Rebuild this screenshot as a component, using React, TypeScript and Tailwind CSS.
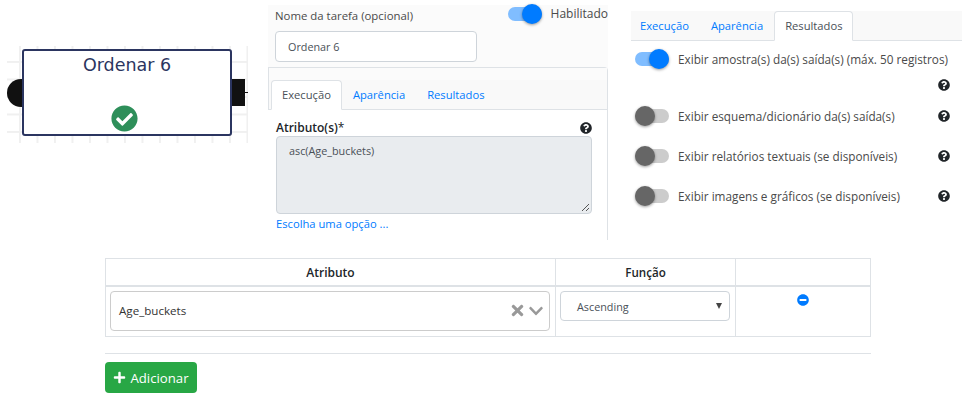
import { FaCheckCircle, FaChevronDown, FaMinusCircle, FaPlus, FaQuestionCircle, FaTimes } from "react-icons/fa";

function Toggle({ on }: { on?: boolean }) {
    return (
        <div className="relative w-[34px] h-[14px] shrink-0">
            <div className={`w-full h-full rounded-full ${on ? "bg-[#80bdff]" : "bg-[#ccc]"}`} />
            <div
                className={`absolute top-[-3px] w-5 h-5 rounded-full shadow-[0_1px_3px_rgba(0,0,0,0.4)] ${
                    on ? "right-0 bg-[#007bff]" : "left-0 bg-[#666]"
                }`}
            />
        </div>
    );
}

function Tabs({ active, recuo }: { active: string; recuo: string }) {
    const nomes = ["Execução", "Aparência", "Resultados"];
    return (
        <div className={`flex h-[30px] bg-[#f9f9f9] border-b border-[#dee2e6] text-[11.2px] ${recuo}`}>
            {nomes.map((nome) => (
                <div
                    key={nome}
                    className={
                        nome === active
                            ? "h-[30px] px-[10px] pt-[5px] bg-white text-[#495057] border border-[#dee2e6] border-b-white rounded-t"
                            : "h-[30px] px-[10px] pt-[5px] text-[#007bff] border border-transparent"
                    }
                >
                    {nome}
                </div>
            ))}
        </div>
    );
}

function OpcaoResultado({ on, texto }: { on?: boolean; texto: string }) {
    return (
        <div className="flex items-center h-10 pl-[4px]">
            <Toggle on={on} />
            <span className="ml-[9px] font-medium text-[11.75px] text-[#4a4a4a] flex-1 whitespace-nowrap">{texto}</span>
            <FaQuestionCircle size={12} className="text-[#212529] mr-[12px]" />
        </div>
    );
}

function NoTarefa() {
    return (
        <div className="relative w-[268px] h-[240px] shrink-0">
            {/* grade do canvas */}
            <div className="absolute left-[7px] top-[46px] w-[241px] h-[97px] bg-[linear-gradient(#f0f0f0_2px,transparent_2px),linear-gradient(90deg,#f0f0f0_2px,transparent_2px)] bg-[size:17.5px_17.5px] bg-[position:12px_15px]" />
            <div className="absolute left-[7px] top-[79px] w-[24px] h-[28px] rounded-l-full bg-[#111]" />
            <div className="absolute left-[228px] top-[79px] w-[17px] h-[27px] bg-[#111]" />
            <div className="absolute left-[245px] top-[92px] w-[3px] h-px bg-[#111]" />
            <div className="absolute left-[22px] top-[49px] w-[210px] h-[87px] bg-white border-2 border-[#2b3560] rounded-[3px] flex flex-col items-center">
                <span className="text-[#2b3560] text-[17.5px] leading-5 mt-[4px] font-['DejaVu_Sans',sans-serif]">Ordenar 6</span>
                <FaCheckCircle size={27} className="absolute left-[87px] top-[54px] text-[#2e8f5a]" />
            </div>
        </div>
    );
}

function PainelTarefa() {
    return (
        <div className="w-[340px] h-[235px] mt-[5px] shrink-0 bg-[#fbfbfb] flex flex-col">
            <div className="flex justify-between pl-[7px] h-[18px] leading-[20px] text-[#4a4a4a]">
                <span className="text-[11.4px] pt-px">Nome da tarefa (opcional)</span>
                <div className="flex items-center">
                    <Toggle on />
                    <span className="ml-[9px] font-medium whitespace-nowrap">Habilitado</span>
                </div>
            </div>
            <div className="ml-[7px] mt-[8px] w-[202px] h-[31px] bg-white border border-[#ced4da] rounded text-[#495057] text-[10.8px] leading-[29px] pl-[12px]">
                Ordenar 6
            </div>
            <div className="mt-[5px] flex-1 border-t border-r border-[#dee2e6] rounded-tr bg-white">
                <div className="pt-[12px] bg-[#fbfbfb] border-l border-[#dee2e6]">
                    <Tabs active="Execução" recuo="pl-[2px]" />
                </div>
                <div className="px-[8px] pt-[9px]">
                    <div className="flex justify-between items-center h-[17px] pr-[7px]">
                        <span className="font-semibold text-[#212529]">
                            Atributo(s)<span className="font-normal">*</span>
                        </span>
                        <FaQuestionCircle size={12} className="text-[#212529]" />
                    </div>
                    <div className="relative w-[316px] h-[78px] bg-[#e9ecef] border border-[#ced4da] rounded text-[#495057] text-[10.8px] pl-[12px] pt-[5px]">
                        asc(Age_buckets)
                        <svg className="absolute right-[1px] bottom-[1px]" width="9" height="9" viewBox="0 0 9 9">
                            <path d="M1 8 8 1M5 8 8 5" stroke="#555" strokeWidth="1" fill="none" />
                        </svg>
                    </div>
                    <div className="text-[#007bff] text-[11.2px] mt-[1px]">Escolha uma opção ...</div>
                </div>
            </div>
        </div>
    );
}

function PainelResultados() {
    return (
        <div className="ml-[23px] w-[331px] pt-[11px] shrink-0">
            <Tabs active="Resultados" recuo="[&>div:first-child]:-ml-[2px]" />
            <div className="flex items-center h-[36px] pl-[4px]">
                <Toggle on />
                <span className="ml-[9px] font-medium text-[11.78px] text-[#4a4a4a] whitespace-nowrap">Exibir amostra(s) da(s) saída(s) (máx. 50 registros)</span>
            </div>
            <div className="flex justify-end pr-[12px] h-[11px] items-center mt-[2px] mb-[6px]">
                <FaQuestionCircle size={12} className="text-[#212529]" />
            </div>
            <OpcaoResultado texto="Exibir esquema/dicionário da(s) saída(s)" />
            <OpcaoResultado texto="Exibir relatórios textuais (se disponíveis)" />
            <OpcaoResultado texto="Exibir imagens e gráficos (se disponíveis)" />
        </div>
    );
}

function TabelaAtributos() {
    return (
        <div className="ml-[105px] mt-[18px] w-[766px]">
            <table className="w-full table-fixed border-collapse border border-[#dee2e6]">
                <thead>
                    <tr className="h-[27px] border-b-2 border-[#dee2e6]">
                        <th className="w-[450px] border border-[#dee2e6] pt-[2px] font-semibold text-[#212529]">Atributo</th>
                        <th className="w-[180px] border border-[#dee2e6] pt-[2px] font-semibold text-[11.6px] text-[#212529]">Função</th>
                        <th className="border border-[#dee2e6]" />
                    </tr>
                </thead>
                <tbody>
                    <tr className="h-[51px]">
                        <td className="border border-[#dee2e6] pl-[4px] pr-[5px] pt-[4px] pb-[5px] align-top">
                            <div className="flex items-center h-[40px] border border-[#ccc] rounded text-[11.6px] text-[#333] pl-[8px] pr-[5px]">
                                <span className="flex-1">Age_buckets</span>
                                <FaTimes size={17} className="text-[#999]" />
                                <FaChevronDown size={16} className="text-[#999] ml-[2px]" />
                            </div>
                        </td>
                        <td className="border border-[#dee2e6] pl-[4px] pr-[5px] pt-[4px] pb-0 align-top">
                            <div className="relative h-[30px] border border-[#ced4da] rounded text-[#495057] text-[10.8px] leading-[30px] pl-[16px]">
                                Ascending
                                <div className="absolute right-[7px] top-[11px] w-0 h-0 border-l-[3px] border-r-[3px] border-t-[6px] border-l-transparent border-r-transparent border-t-[#444]" />
                            </div>
                        </td>
                        <td className="border border-[#dee2e6] pt-[7px] align-top">
                            <div className="flex justify-center">
                                <FaMinusCircle size={12} className="text-[#007bff]" />
                            </div>
                        </td>
                    </tr>
                </tbody>
            </table>
            <div className="mt-[16px] border-t border-[#dee2e6]" />
            <button className="mt-[8px] flex items-center h-[31px] w-[92px] justify-center gap-[4px] bg-[#28a745] text-white text-[13.2px] rounded">
                <FaPlus size={13} />
                Adicionar
            </button>
        </div>
    );
}

export default function App() {
    return (
        <div className="w-[968px] h-[400px] bg-white overflow-hidden text-[12px] leading-[18px] font-['Open_Sans',sans-serif]">
            <div className="flex h-[240px]">
                <NoTarefa />
                <PainelTarefa />
                <PainelResultados />
            </div>
            <TabelaAtributos />
        </div>
    );
}
